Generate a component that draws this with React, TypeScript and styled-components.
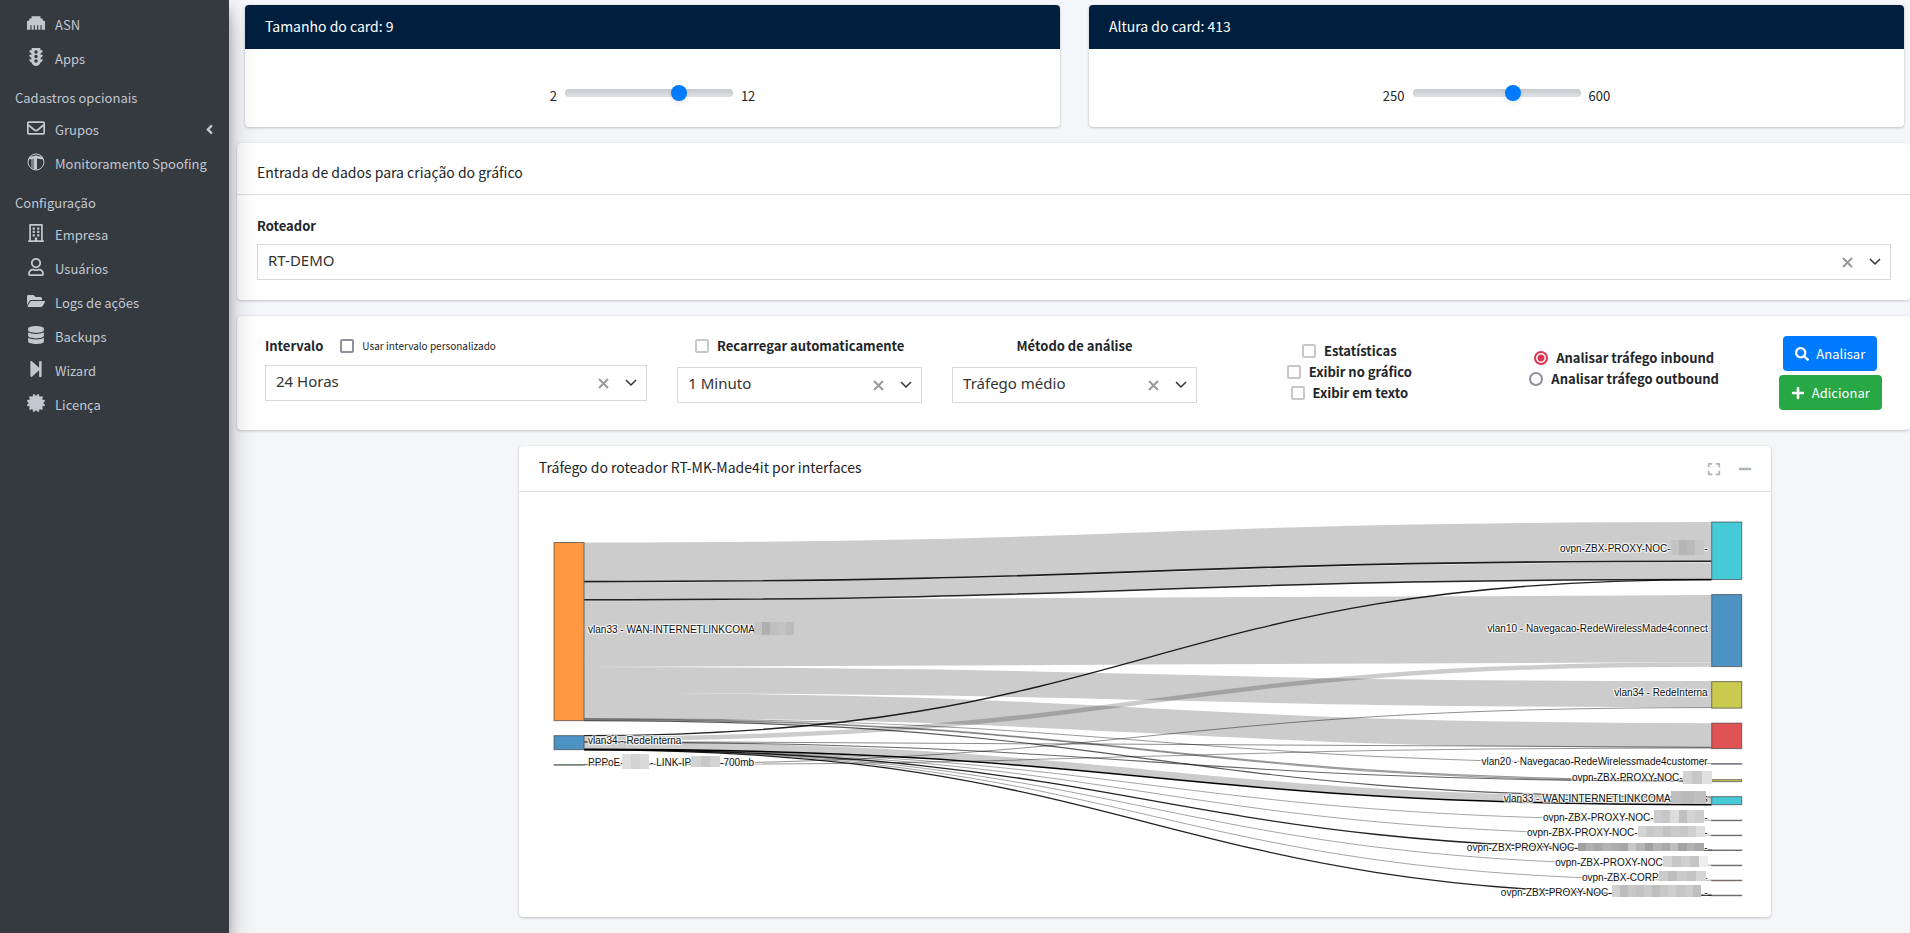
import React, { useState } from "react";
import styled, { createGlobalStyle, css } from "styled-components";
import {
  FaAngleLeft,
  FaCertificate,
  FaDatabase,
  FaEthernet,
  FaExpand,
  FaFolderOpen,
  FaMinus,
  FaPlus,
  FaRegBuilding,
  FaRegEnvelope,
  FaRegUser,
  FaSearch,
  FaStepForward,
  FaTrafficLight,
} from "react-icons/fa";

const GlobalStyle = createGlobalStyle`
  *, *::before, *::after { box-sizing: border-box; }
  body {
    margin: 0;
    background: #f4f6f9;
    color: #212529;
    font-family: "Noto Sans CJK JP", "Open Sans", sans-serif;
    font-size: 13px;
    line-height: 21px;
  }
  button, input, select { font: inherit; color: inherit; margin: 0; }
`;

/* ---------- shell ---------- */

const Shell = styled.div`
  display: flex;
  min-height: 100vh;
`;

const Sidebar = styled.nav`
  flex: 0 0 229px;
  min-width: 0;
  padding-top: 7px;
  background: #343a40;
  color: #c2c7d0;
  box-shadow: 0 14px 28px rgba(0, 0, 0, 0.25), 0 10px 10px rgba(0, 0, 0, 0.22);
  z-index: 1;
`;

const NavHeader = styled.h2`
  margin: 0;
  height: 37px;
  padding: 12px 15px 0;
  font-size: 13px;
  font-weight: 400;
  line-height: 21px;
`;

const NavList = styled.ul`
  margin: 0;
  padding: 0;
  list-style: none;
`;

const NavLink = styled.a`
  display: flex;
  align-items: center;
  height: 34px;
  padding: 0 12px 0 24px;
  color: inherit;
  text-decoration: none;
`;

const NavIcon = styled.span`
  display: flex;
  justify-content: center;
  width: 24px;
  margin-right: 7px;
  margin-bottom: 3px;
  font-size: 18px;
`;

const NavText = styled.span`
  flex: 1;
  white-space: nowrap;
`;

const Main = styled.main`
  flex: 1;
  min-width: 0;
  padding: 5px 0 16px 8px;
  display: flex;
  flex-direction: column;
  gap: 16px;
`;

/* ---------- cards ---------- */

const Card = styled.section`
  background: #fff;
  border-radius: 4px;
  box-shadow: 0 0 1px rgba(0, 0, 0, 0.125), 0 1px 3px rgba(0, 0, 0, 0.2);
`;

const CardTitle = styled.h3`
  margin: 0;
  font-size: 14px;
  font-weight: 400;
  line-height: 20px;
`;

const SizeRow = styled.div`
  display: grid;
  grid-template-columns: 1fr 1fr;
  gap: 29px;
  padding: 0 6px 0 8px;
`;

const NavyHeader = styled.header`
  padding: 11px 20px 13px;
  background: #001f3f;
  color: #fff;
  border-radius: 4px 4px 0 0;
`;

const RangeBody = styled.div`
  display: flex;
  justify-content: center;
  gap: 8px;
  height: 78px;
  padding-top: 36px;
`;

const Range = styled.input`
  appearance: none;
  width: 168px;
  height: 16px;
  background: transparent;
  &::-webkit-slider-runnable-track {
    height: 8px;
    border-radius: 4px;
    background: #dee2e6;
    box-shadow: inset 0 4px 4px rgba(0, 0, 0, 0.1);
  }
  &::-webkit-slider-thumb {
    appearance: none;
    width: 16px;
    height: 16px;
    margin-top: -4px;
    border-radius: 50%;
    background: #007bff;
    box-shadow: 0 2px 4px rgba(0, 0, 0, 0.1);
  }
`;

const EntryHeader = styled.header`
  padding: 19px 20px 12px;
  border-bottom: 1px solid #dfdfdf;
`;

const EntryBody = styled.div`
  display: flex;
  flex-direction: column;
  gap: 8px;
  padding: 20px 19px 20px 20px;
`;

/* ---------- form controls ---------- */

const StrongLabel = styled.label`
  font-weight: 700;
  white-space: nowrap;
`;

const SelectFrame = styled.div`
  display: flex;
  align-items: center;
  width: 100%;
  height: 36px;
  padding: 0 9px 0 10px;
  border: 1px solid #d9d9d9;
  background: #fff;
`;

const NativeSelect = styled.select`
  appearance: none;
  flex: 1;
  min-width: 0;
  height: 34px;
  padding: 0 0 3px;
  border: 0;
  background: transparent;
  color: #333;
  font-family: "Noto Sans", "Open Sans", sans-serif;
  font-size: 15px;
`;

const ClearButton = styled.button`
  display: flex;
  padding: 0;
  margin-right: 16px;
  border: 0;
  background: none;
  color: #999;
`;

const Filters = styled(Card)`
  display: grid;
  grid-template-columns: 3fr 2fr 2fr 2fr 2fr 1fr;
  height: 114px;
  padding: 19px 11px 0 13px;
`;

const FilterColumn = styled.div<{ $gap?: number; $top?: number; $center?: boolean }>`
  display: flex;
  flex-direction: column;
  gap: ${(p) => p.$gap ?? 0}px;
  align-items: ${(p) => (p.$center ? "center" : "stretch")};
  min-width: 0;
  padding: ${(p) => p.$top ?? 0}px 15px 0;
`;

const OptionRow = styled.div<{ $center?: boolean }>`
  display: flex;
  align-items: center;
  justify-content: ${(p) => (p.$center ? "center" : "flex-start")};
  gap: 8px;
  height: 21px;
`;

const box = css<{ $muted?: boolean }>`
  appearance: none;
  flex: none;
  width: 14px;
  height: 14px;
  border: 2px solid ${(p) => (p.$muted ? "#c7c7cd" : "#8f8f9d")};
  background: #fff;
`;

const Checkbox = styled.input<{ $muted?: boolean }>`
  ${box}
  border-radius: 2px;
  &:checked { background: #007bff; }
`;

const Radio = styled.input`
  ${box}
  border-radius: 50%;
  &:checked {
    border-color: #dc3552;
    background: radial-gradient(circle, #dc3552 3px, #fff 4px);
  }
`;

const CustomLabel = styled.label`
  font-size: 10px;
  white-space: nowrap;
`;

const Spacer = styled.span`
  width: 1px;
`;

const ActionButton = styled.button<{ $color: string }>`
  display: flex;
  align-items: center;
  gap: 7px;
  height: 35px;
  padding: 0 12px;
  border: 0;
  border-radius: 4px;
  background: ${(p) => p.$color};
  color: #fff;
  white-space: nowrap;
  svg { font-size: 14px; }
`;

/* ---------- chart ---------- */

const ChartRow = styled.div`
  display: grid;
  grid-template-columns: repeat(12, 1fr);
`;

const ChartCard = styled(Card)`
  grid-column: 3 / span 9;
  margin-left: 3px;
`;

const ChartHeader = styled.header`
  display: flex;
  align-items: center;
  height: 46px;
  padding: 0 19px 0 20px;
  border-bottom: 1px solid #dfdfdf;
  ${CardTitle} { flex: 1; padding-bottom: 3px; }
`;

const ToolButton = styled.button`
  display: flex;
  padding: 0;
  margin-left: 17px;
  border: 0;
  background: none;
  color: #adb5bd;
  font-size: 14px;
`;

const Diagram = styled.svg`
  display: block;
  width: 100%;
  height: auto;
`;

const NodeLabel = styled.text`
  font-family: "Liberation Sans", Arial, sans-serif;
  font-size: 10px;
  fill: #111;
  text-shadow: 1px 1px 1px #fff, -1px -1px 1px #fff, 1px -1px 1px #fff, -1px 1px 1px #fff;
  white-space: pre;
`;

/* ---------- data ---------- */

const PillarIcon = () => (
  <svg width="18" height="18" viewBox="0 0 18 18" fill="none" stroke="currentColor">
    <circle cx="9" cy="9" r="8" strokeWidth="1" />
    <path d="M2 4 9 2.500l7 1.500v2.500l-6-1v11l-3.500-.3V5.800L2 6.500z" fill="currentColor" stroke="none" />
    <path d="M5 6v9.500" strokeWidth="1" />
  </svg>
);

type NavItem = { text: string; icon: React.ReactNode; expandable?: boolean };

const navGroups: { title?: string; items: NavItem[] }[] = [
  {
    items: [
      { text: "ASN", icon: <FaEthernet /> },
      { text: "Apps", icon: <FaTrafficLight /> },
    ],
  },
  {
    title: "Cadastros opcionais",
    items: [
      { text: "Grupos", icon: <FaRegEnvelope />, expandable: true },
      { text: "Monitoramento Spoofing", icon: <PillarIcon /> },
    ],
  },
  {
    title: "Configuração",
    items: [
      { text: "Empresa", icon: <FaRegBuilding /> },
      { text: "Usuários", icon: <FaRegUser /> },
      { text: "Logs de ações", icon: <FaFolderOpen /> },
      { text: "Backups", icon: <FaDatabase /> },
      { text: "Wizard", icon: <FaStepForward /> },
      { text: "Licença", icon: <FaCertificate /> },
    ],
  },
];

const SOURCE_X = 35;
const TARGET_X = 1192;
const NODE_WIDTH = 30;

const nodes = [
  { x: SOURCE_X, y: 50.5, h: 178, color: "#ff983e" },
  { x: SOURCE_X, y: 243.5, h: 14, color: "#4c92c3" },
  { x: SOURCE_X, y: 272.5, h: 0.5, color: "#56b356" },
  { x: TARGET_X, y: 30, h: 57.5, color: "#45cad8" },
  { x: TARGET_X, y: 102.5, h: 72, color: "#4c92c3" },
  { x: TARGET_X, y: 189.5, h: 26.5, color: "#c9ca4e" },
  { x: TARGET_X, y: 231, h: 25.5, color: "#de5253" },
  { x: TARGET_X, y: 271.5, h: 0.5, color: "#a985ca" },
  { x: TARGET_X, y: 287.5, h: 2, color: "#c9ca4e" },
  { x: TARGET_X, y: 304.5, h: 8, color: "#45cad8" },
  { x: TARGET_X, y: 328, h: 0.5, color: "#d7a0a0" },
  { x: TARGET_X, y: 343, h: 0.5, color: "#8fb7c3" },
  { x: TARGET_X, y: 357.8, h: 0.5, color: "#e3986a" },
  { x: TARGET_X, y: 373, h: 0.5, color: "#8fa7b3" },
  { x: TARGET_X, y: 388, h: 0.5, color: "#e3986a" },
  { x: TARGET_X, y: 403, h: 0.5, color: "#9f9fb3" },
];

/* [source y, target y, thickness, opacity]; y values are the centre line */
const links: [number, number, number, number][] = [
  [70, 49.5, 39, 0.2],
  [99, 79, 17, 0.2],
  [89.5, 69.2, 1.7, 0.88],
  [107.8, 87.5, 1.5, 0.85],
  [141.5, 136.5, 67, 0.2],
  [188, 202, 26, 0.2],
  [213.5, 243.5, 25, 0.2],
  [226.3, 271.3, 1, 0.4],
  [227, 287.8, 1.2, 0.4],
  [227.6, 289, 1, 0.4],
  [228.5, 304.8, 1.2, 0.65],
  [243.5, 87.5, 1.3, 0.87],
  [246.5, 172.3, 4.5, 0.2],
  [249.3, 255, 1, 0.45],
  [250, 289, 1.1, 0.6],
  [253.5, 308.5, 7, 0.2],
  [257.2, 312.6, 1.5, 1],
  [257.2, 328, 0.8, 0.45],
  [257.3, 343, 0.8, 0.45],
  [257.4, 358, 1.3, 0.87],
  [257.5, 373, 0.8, 0.45],
  [257.6, 388, 0.8, 0.45],
  [257.7, 403, 1.3, 0.87],
  [272.3, 215.5, 0.8, 0.55],
  [272.6, 255.8, 1, 0.4],
];

const curve = (from: number, to: number) => {
  const x0 = SOURCE_X + NODE_WIDTH;
  const mid = (x0 + TARGET_X) / 2;
  return `M${x0} ${from}C${mid} ${from} ${mid} ${to} ${TARGET_X} ${to}`;
};

const PROXY = "ovpn-ZBX-PROXY-NOC-";

const labels: { x: number; y: number; text: string; end?: boolean }[] = [
  { x: 69, y: 141, text: "vlan33 - WAN-INTERNETLINKCOMA" },
  { x: 69, y: 252, text: "vlan34 - RedeInterna" },
  { x: 69, y: 274, text: "PPPoE-" },
  { x: 131, y: 274, text: "- LINK-IP" },
  { x: 201, y: 274, text: "-700mb" },
  { x: 1151, y: 60, text: PROXY, end: true },
  { x: 1188, y: 60, text: "-", end: true },
  { x: 1188, y: 140, text: "vlan10 - Navegacao-RedeWirelessMade4connect", end: true },
  { x: 1188, y: 204, text: "vlan34 - RedeInterna", end: true },
  { x: 1188, y: 273, text: "vlan20 - Navegacao-RedeWirelessmade4customer", end: true },
  { x: 1163, y: 289, text: PROXY, end: true },
  { x: 1151, y: 310, text: "vlan33 - WAN-INTERNETLINKCOMA", end: true },
  { x: 1188, y: 310, text: "s", end: true },
  { x: 1134, y: 329, text: PROXY, end: true },
  { x: 1188, y: 329, text: "-", end: true },
  { x: 1118, y: 344, text: PROXY, end: true },
  { x: 1188, y: 344, text: "-", end: true },
  { x: 1058, y: 359, text: PROXY, end: true },
  { x: 1188, y: 359, text: "-", end: true },
  { x: 1143, y: 374, text: "ovpn-ZBX-PROXY-NOC", end: true },
  { x: 1139, y: 389, text: "ovpn-ZBX-CORP", end: true },
  { x: 1188, y: 389, text: "-", end: true },
  { x: 1092, y: 404, text: PROXY, end: true },
  { x: 1188, y: 404, text: ". -", end: true },
];

/* mosaics over the private part of a name: one grey per tile */
const mosaics: { x: number; y: number; w: number; h: number; tones: string[] }[] = [
  { x: 235, y: 130, w: 40, h: 13, tones: ["#c4c4c4", "#afafaf", "#bfbfbf", "#c3c3c3", "#bbbbbb"] },
  { x: 103, y: 262, w: 27, h: 15, tones: ["#dedede", "#d2d2d2", "#d9d9d9"] },
  { x: 172, y: 264, w: 29, h: 11, tones: ["#d2d2d2", "#c8c8c8", "#d3d3d3"] },
  { x: 1151, y: 48, w: 33, h: 15, tones: ["#c3c3c3", "#b5b5b5", "#bababa", "#c6c6c6"] },
  { x: 1163, y: 279, w: 29, h: 13, tones: ["#d2d2d2", "#c7c7c7", "#e0e0e0"] },
  { x: 1151, y: 299, w: 35, h: 13, tones: ["#bebebe", "#bababa", "#c0c0c0"] },
  { x: 1134, y: 318, w: 50, h: 13, tones: ["#cccccc", "#c6c6c6", "#dcdcdc", "#bfbfbf", "#d3d3d3", "#cecece"] },
  { x: 1118, y: 334, w: 67, h: 11, tones: ["#d3d3d3", "#c8c8c8", "#cccccc", "#c2c2c2", "#cacaca", "#c7c7c7", "#d0d0d0", "#dedede"] },
  { x: 1058, y: 351, w: 126, h: 8, tones: ["#a0a0a0", "#b0b0b0", "#a8a8a8", "#b3b3b3", "#abacac", "#a6a6a6", "#c6c6c6", "#b4b4b4", "#a1a1a1", "#b4b4b4", "#aaaaaa", "#bdbdbd", "#a4a4a4", "#b1b1b1", "#a8a8a8"] },
  { x: 1143, y: 364, w: 45, h: 11, tones: ["#d5d5d5", "#c6c6c6", "#cfcfcf", "#c4c4c4", "#eeeeee"] },
  { x: 1139, y: 379, w: 47, h: 10, tones: ["#cbcbcb", "#bdbdbd", "#cacaca", "#c4c4c4", "#d5d5d5"] },
  { x: 1092, y: 393, w: 89, h: 12, tones: ["#d2d2d2", "#bdbdbd", "#c8c8c8", "#c2c2c2", "#cacaca", "#bebebe", "#c8c8c8", "#cfcfcf", "#c6c6c6", "#cccccc", "#bfbfbf"] },
];

/* ---------- components ---------- */

function SelectBox({ id, label, value }: { id: string; label?: string; value: string }) {
  return (
    <SelectFrame>
      <NativeSelect id={id} aria-label={label} defaultValue={value}>
        <option value={value}>{value}</option>
      </NativeSelect>
      <ClearButton type="button" aria-label="Limpar">
        <svg width="11" height="11" viewBox="0 0 11 11" stroke="currentColor" strokeWidth="2">
          <path d="M1 1l9 9M10 1l-9 9" />
        </svg>
      </ClearButton>
      <svg width="12" height="8" viewBox="0 0 12 8" fill="none" stroke="#333" strokeWidth="1.5">
        <path d="M1 1l5 5 5-5" />
      </svg>
    </SelectFrame>
  );
}

function RangeCard(props: { title: string; min: number; max: number; value: number }) {
  return (
    <Card>
      <NavyHeader>
        <CardTitle>{props.title}</CardTitle>
      </NavyHeader>
      <RangeBody>
        <span>{props.min}</span>
        <Range type="range" aria-label={props.title} min={props.min} max={props.max} defaultValue={props.value} />
        <span>{props.max}</span>
      </RangeBody>
    </Card>
  );
}

function Sankey() {
  return (
    <Diagram viewBox="0 0 1251 425" role="img" aria-label="Tráfego por interfaces">
      <g fill="none" stroke="#000">
        {links.map(([from, to, width, opacity], i) => (
          <path key={i} d={curve(from, to)} strokeWidth={width} strokeOpacity={opacity} />
        ))}
      </g>
      <g stroke="#444" strokeOpacity="0.7">
        {nodes.map((n, i) => (
          <rect key={i} x={n.x} y={n.y} width={NODE_WIDTH} height={n.h} fill={n.color} />
        ))}
      </g>
      {labels.map((l, i) => (
        <NodeLabel key={i} x={l.x} y={l.y} textAnchor={l.end ? "end" : "start"}>
          {l.text}
        </NodeLabel>
      ))}
      {mosaics.map((m, i) => (
        <g key={i} shapeRendering="crispEdges">
          {m.tones.map((tone, j) => (
            <rect
              key={j}
              x={m.x + (j * m.w) / m.tones.length}
              y={m.y}
              width={m.w / m.tones.length}
              height={m.h}
              fill={tone}
            />
          ))}
        </g>
      ))}
    </Diagram>
  );
}

const displayOptions = ["Estatísticas", "Exibir no gráfico", "Exibir em texto"];
const directions = ["Analisar tráfego inbound", "Analisar tráfego outbound"];

export default function App() {
  const [direction, setDirection] = useState(directions[0]);

  return (
    <>
      <GlobalStyle />
      <Shell>
        <Sidebar>
          {navGroups.map((group, i) => (
            <React.Fragment key={i}>
              {group.title && <NavHeader>{group.title}</NavHeader>}
              <NavList>
                {group.items.map((item) => (
                  <li key={item.text}>
                    <NavLink href="#">
                      <NavIcon>{item.icon}</NavIcon>
                      <NavText>{item.text}</NavText>
                      {item.expandable && <FaAngleLeft size={15} />}
                    </NavLink>
                  </li>
                ))}
              </NavList>
            </React.Fragment>
          ))}
        </Sidebar>

        <Main>
          <SizeRow>
            <RangeCard title="Tamanho do card: 9" min={2} max={12} value={9} />
            <RangeCard title="Altura do card: 413" min={250} max={600} value={463} />
          </SizeRow>

          <Card>
            <EntryHeader>
              <CardTitle>Entrada de dados para criação do gráfico</CardTitle>
            </EntryHeader>
            <EntryBody>
              <StrongLabel htmlFor="roteador">Roteador</StrongLabel>
              <SelectBox id="roteador" value="RT-DEMO" />
            </EntryBody>
          </Card>

          <Filters>
            <FilterColumn $gap={9}>
              <OptionRow>
                <StrongLabel htmlFor="intervalo">Intervalo</StrongLabel>
                <Spacer />
                <Checkbox type="checkbox" id="personalizado" />
                <CustomLabel htmlFor="personalizado">Usar intervalo personalizado</CustomLabel>
              </OptionRow>
              <SelectBox id="intervalo" value="24 Horas" />
            </FilterColumn>
            <FilterColumn $gap={11}>
              <OptionRow $center>
                <Checkbox type="checkbox" id="recarregar" $muted />
                <StrongLabel htmlFor="recarregar">Recarregar automaticamente</StrongLabel>
              </OptionRow>
              <SelectBox id="periodo" label="Período de recarga" value="1 Minuto" />
            </FilterColumn>
            <FilterColumn $gap={11}>
              <OptionRow $center>
                <StrongLabel htmlFor="metodo">Método de análise</StrongLabel>
              </OptionRow>
              <SelectBox id="metodo" value="Tráfego médio" />
            </FilterColumn>
            <FilterColumn $center $top={5}>
              {displayOptions.map((text, i) => (
                <OptionRow key={text}>
                  <Checkbox type="checkbox" id={`exibir-${i}`} $muted />
                  <StrongLabel htmlFor={`exibir-${i}`}>{text}</StrongLabel>
                </OptionRow>
              ))}
            </FilterColumn>
            <FilterColumn $center $top={12}>
              {directions.map((text, i) => (
                <OptionRow key={text}>
                  <Radio
                    type="radio"
                    name="direcao"
                    id={`direcao-${i}`}
                    checked={direction === text}
                    onChange={() => setDirection(text)}
                  />
                  <StrongLabel htmlFor={`direcao-${i}`}>{text}</StrongLabel>
                </OptionRow>
              ))}
            </FilterColumn>
            <FilterColumn $center $gap={4} $top={1}>
              <ActionButton type="button" $color="#007bff">
                <FaSearch />
                Analisar
              </ActionButton>
              <ActionButton type="button" $color="#28a745">
                <FaPlus />
                Adicionar
              </ActionButton>
            </FilterColumn>
          </Filters>

          <ChartRow>
            <ChartCard>
              <ChartHeader>
                <CardTitle>Tráfego do roteador RT-MK-Made4it por interfaces</CardTitle>
                <ToolButton type="button" aria-label="Expandir">
                  <FaExpand />
                </ToolButton>
                <ToolButton type="button" aria-label="Minimizar">
                  <FaMinus />
                </ToolButton>
              </ChartHeader>
              <Sankey />
            </ChartCard>
          </ChartRow>
        </Main>
      </Shell>
    </>
  );
}
